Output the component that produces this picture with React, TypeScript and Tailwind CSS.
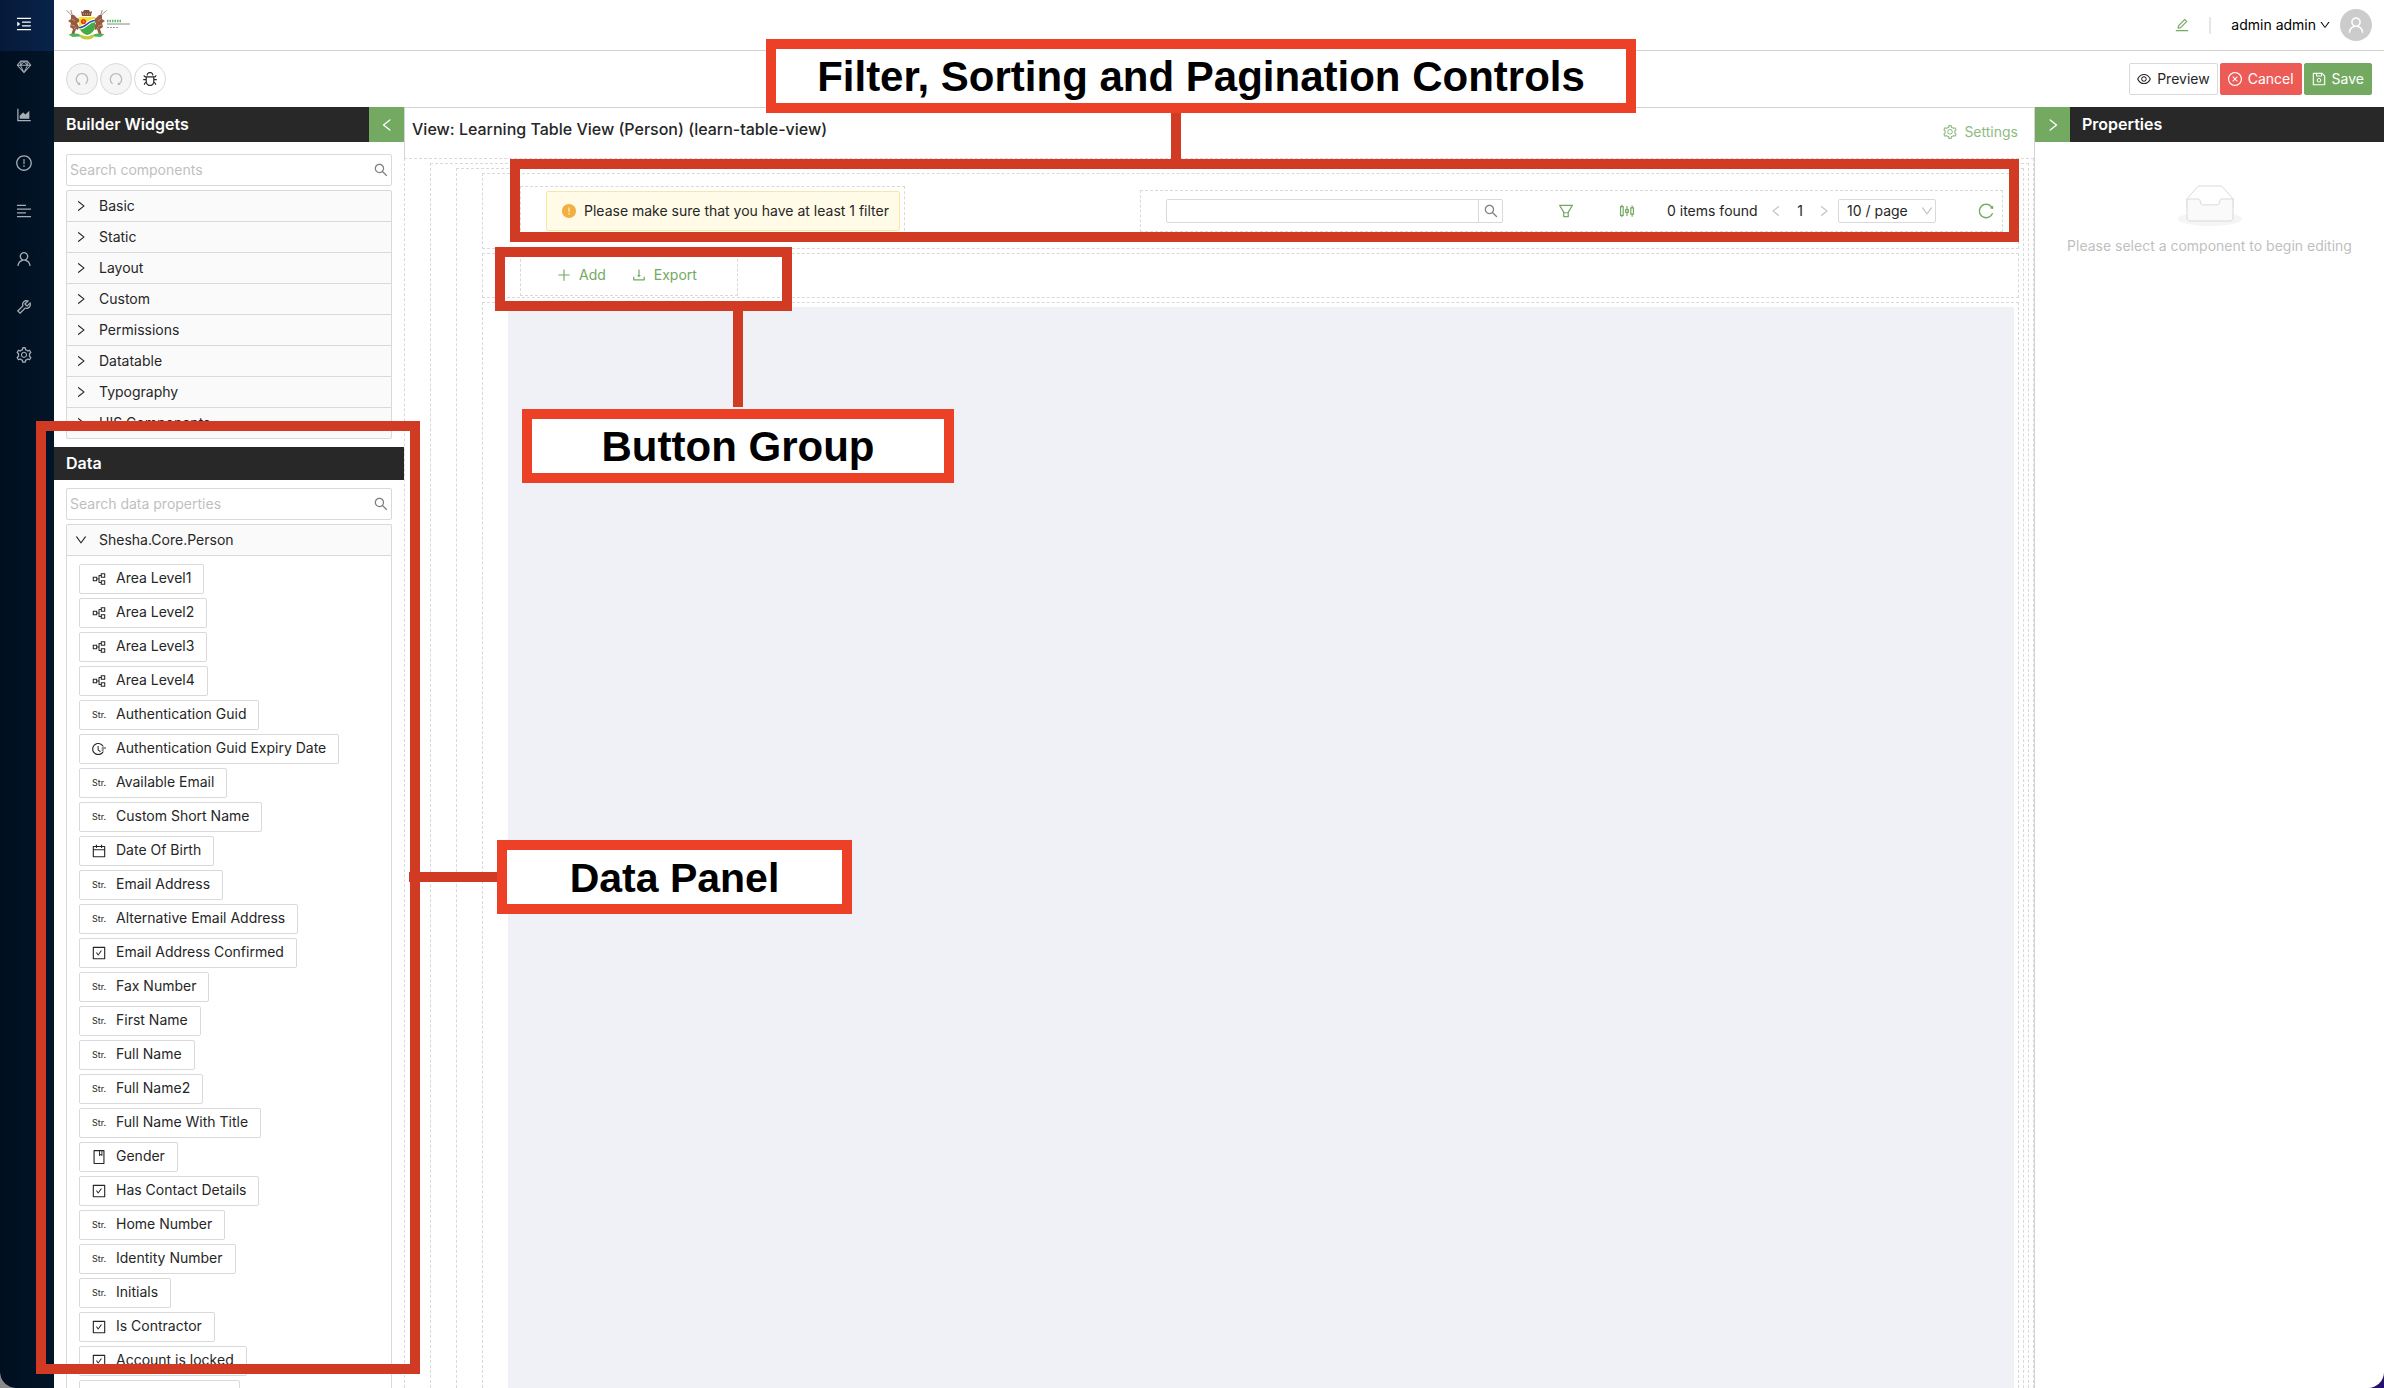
import React, { useState } from 'react';
import type { IconType } from 'react-icons';
import {
  AiFillExclamationCircle,
  AiOutlineAlignLeft,
  AiOutlineAreaChart,
  AiOutlineBook,
  AiOutlineBug,
  AiOutlineCalendar,
  AiOutlineCheckSquare,
  AiOutlineCloseCircle,
  AiOutlineDown,
  AiOutlineDownload,
  AiOutlineEdit,
  AiOutlineExclamationCircle,
  AiOutlineEye,
  AiOutlineFieldTime,
  AiOutlineFilter,
  AiOutlineLeft,
  AiOutlineMenuUnfold,
  AiOutlinePartition,
  AiOutlinePlus,
  AiOutlineRedo,
  AiOutlineReload,
  AiOutlineRight,
  AiOutlineSave,
  AiOutlineSearch,
  AiOutlineSetting,
  AiOutlineSketch,
  AiOutlineSliders,
  AiOutlineTool,
  AiOutlineUndo,
  AiOutlineUser,
} from 'react-icons/ai';

type Kind = 'ref' | 'str' | 'time' | 'date' | 'bool' | 'list';
type Size = 'xs' | 'sm' | 'md' | 'lg' | 'xl';

const boxSize: Record<Size, string> = {
  xs: 'size-2.5',
  sm: 'size-3',
  md: 'size-3.5',
  lg: 'size-4',
  xl: 'size-[18px]',
};

const glyphSize: Record<Size, string> = {
  xs: 'size-3',
  sm: 'size-3.5',
  md: 'size-4',
  lg: 'size-[18px]',
  xl: 'size-5',
};

// The glyphs carry an inner margin, so each is drawn slightly larger than its box.
function Icon({ as: Glyph, size = 'md', className = '' }: { as: IconType; size?: Size; className?: string }) {
  return (
    <span className={`inline-flex shrink-0 items-center justify-center ${boxSize[size]} ${className}`}>
      <Glyph className={`shrink-0 ${glyphSize[size]}`} aria-hidden="true" />
    </span>
  );
}

const widgetGroups = ['Basic', 'Static', 'Layout', 'Custom', 'Permissions', 'Datatable', 'Typography', 'HIS Components'];

const properties: { label: string; kind: Kind }[] = [
  { label: 'Area Level1', kind: 'ref' },
  { label: 'Area Level2', kind: 'ref' },
  { label: 'Area Level3', kind: 'ref' },
  { label: 'Area Level4', kind: 'ref' },
  { label: 'Authentication Guid', kind: 'str' },
  { label: 'Authentication Guid Expiry Date', kind: 'time' },
  { label: 'Available Email', kind: 'str' },
  { label: 'Custom Short Name', kind: 'str' },
  { label: 'Date Of Birth', kind: 'date' },
  { label: 'Email Address', kind: 'str' },
  { label: 'Alternative Email Address', kind: 'str' },
  { label: 'Email Address Confirmed', kind: 'bool' },
  { label: 'Fax Number', kind: 'str' },
  { label: 'First Name', kind: 'str' },
  { label: 'Full Name', kind: 'str' },
  { label: 'Full Name2', kind: 'str' },
  { label: 'Full Name With Title', kind: 'str' },
  { label: 'Gender', kind: 'list' },
  { label: 'Has Contact Details', kind: 'bool' },
  { label: 'Home Number', kind: 'str' },
  { label: 'Identity Number', kind: 'str' },
  { label: 'Initials', kind: 'str' },
  { label: 'Is Contractor', kind: 'bool' },
  { label: 'Account is locked', kind: 'bool' },
];

function KindIcon({ kind }: { kind: Kind }) {
  switch (kind) {
    case 'ref':
      return <Icon as={AiOutlinePartition} />;
    case 'time':
      return <Icon as={AiOutlineFieldTime} />;
    case 'date':
      return <Icon as={AiOutlineCalendar} />;
    case 'bool':
      return <Icon as={AiOutlineCheckSquare} />;
    case 'list':
      return <Icon as={AiOutlineBook} />;
    default:
      return <span className="text-[9px] leading-[14px]">Str.</span>;
  }
}

function Logo() {
  return (
    <svg className="h-8 w-[66px]" viewBox="0 0 66 32" role="img" aria-label="Department of Health">
      <g stroke="#8b8078" strokeWidth="0.900" fill="none">
        <path d="M0.500 1.500C2 3 4 4 6 7M5 1c0 2 1 4 2 6" />
        <path d="M40.500 1.500C39 3 37 4 35 7M36 1c0 2-1 4-2 6" />
      </g>
      <g fill="#985a40">
        <path d="M5 6l3 0 3 3 2 1v3l-2 1 2 4-1 3-2-1-2 6H5l2-6-3-2 1-4-3-2 3-2z" />
        <path d="M36 6l-3 0-3 3-2 1v3l2 1-2 4 1 3 2-1 2 6h3l-2-6 3-2-1-4 3-2-3-2z" />
      </g>
      <g stroke="#c9a184" strokeWidth="0.800" fill="none">
        <path d="M6 10l3 2M5 16l4 1M8 20l2-2" />
        <path d="M35 10l-3 2M36 16l-4 1M33 20l-2-2" />
      </g>
      <path d="M16 7l-1-5 2 1 1-2h5l1 2 2-1-1 5z" fill="#80503f" />
      <path d="M17 5h7" stroke="#dcb78e" strokeDasharray="1 1" />
      <path d="M13 8h16v9c0 5-4 8-8 9-4-1-8-4-8-9z" fill="#f8e02e" />
      <path d="M14 20c6 1 9-7 15-7v4c0 5-4 8-8 9-3-1-6-3-7-6z" fill="#43ab4c" />
      <path d="M13 18.500c6 1 9-7 16-7" stroke="#fff" strokeWidth="3.500" fill="none" />
      <path d="M13 18.500c6 1 9-7 16-7" stroke="#2557ad" strokeWidth="1.700" fill="none" />
      <circle cx="17.500" cy="12.500" r="2.600" fill="#e03a24" />
      <circle cx="17.500" cy="12.500" r="0.900" fill="#f5a623" />
      <path d="M2.500 25.500c5-1.500 9-1 11 0 4 2 10 2 14 0 3-1 7-1.500 11 0l-4 2.500c-8-1-19-1-28 0z" fill="#4fb357" />
      <path d="M13 25c5 3 11 3 16 0l-2 4c-4 2-8 2-12 0z" fill="#c3cc3a" />
      <path d="M41 12h15" stroke="#5cbb63" strokeWidth="2.500" strokeDasharray="1.500 1" />
      <path d="M41 15h23" stroke="#888" />
      <path d="M41 18.500h12" stroke="#999" strokeDasharray="2 1" />
    </svg>
  );
}

function EmptyBox() {
  return (
    <svg width="64" height="41" viewBox="0 0 64 41" aria-hidden="true">
      <g transform="translate(0 1)" fill="none" fillRule="evenodd">
        <ellipse fill="#f5f5f5" cx="32" cy="33" rx="32" ry="7" />
        <g fillRule="nonzero" stroke="#d9d9d9">
          <path d="M55 12.760L44.854 1.258C44.367.474 43.656 0 42.907 0H21.093c-.749 0-1.460.474-1.947 1.257L9 12.761V22h46v-9.240z" />
          <path
            d="M41.613 15.931c0-1.605.994-2.930 2.227-2.931H55v18.137C55 33.260 53.680 35 52.050 35h-40.100C10.320 35 9 33.259 9 31.137V13h11.160c1.233 0 2.227 1.323 2.227 2.928v.022c0 1.605 1.005 2.901 2.237 2.901h14.752c1.232 0 2.237-1.308 2.237-2.913v-.007z"
            fill="#fafafa"
          />
        </g>
      </g>
    </svg>
  );
}

function SideNav() {
  const items = [
    { name: 'Design', icon: AiOutlineSketch },
    { name: 'Charts', icon: AiOutlineAreaChart },
    { name: 'Alerts', icon: AiOutlineExclamationCircle },
    { name: 'Forms', icon: AiOutlineAlignLeft },
    { name: 'Users', icon: AiOutlineUser },
    { name: 'Tools', icon: AiOutlineTool },
    { name: 'Settings', icon: AiOutlineSetting },
  ];
  return (
    <nav className="flex w-[54px] shrink-0 flex-col bg-linear-to-r from-[#000f20] to-[#031528]">
      <button aria-label="Expand menu" className="flex h-[51px] items-center bg-linear-to-r from-[#06193a] to-[#08244a] pb-1 pl-4 text-white">
        <Icon as={AiOutlineMenuUnfold} size="lg" />
      </button>
      <ul className="-mt-2">
        {items.map((item) => (
          <li key={item.name}>
            <a href="#" aria-label={item.name} className="flex h-12 items-center pl-4 text-[#a6adb4]">
              <Icon as={item.icon} size="lg" />
            </a>
          </li>
        ))}
      </ul>
    </nav>
  );
}

function TopBar() {
  return (
    <header className="flex h-[51px] shrink-0 items-center border-b border-[#d3d3d3] px-3">
      <Logo />
      <div className="ml-auto flex items-center">
        <button aria-label="Edit" className="flex text-[#73a961]">
          <Icon as={AiOutlineEdit} />
        </button>
        <span className="ml-5 h-[17px] w-0.5 bg-[#e6e6e6]" />
        <button className="ml-5 flex items-center gap-1 text-black">
          admin admin <Icon as={AiOutlineDown} size="xs" />
        </button>
        <span className="ml-2.5 flex size-8 items-center justify-center rounded-full bg-[#ccc] text-white">
          <Icon as={AiOutlineUser} size="xl" />
        </span>
      </div>
    </header>
  );
}

function Toolbar() {
  return (
    <div className="flex h-14 shrink-0 items-center justify-between px-3">
      <div className="flex gap-0.5">
        <button disabled aria-label="Undo" className="flex size-8 items-center justify-center rounded-full border border-[#d9d9d9] bg-[#f5f5f5] text-[#b8b8b8]">
          <Icon as={AiOutlineUndo} />
        </button>
        <button disabled aria-label="Redo" className="flex size-8 items-center justify-center rounded-full border border-[#d9d9d9] bg-[#f5f5f5] text-[#b8b8b8]">
          <Icon as={AiOutlineRedo} />
        </button>
        <button aria-label="Debug" className="flex size-8 items-center justify-center rounded-full border border-[#d9d9d9] bg-white">
          <Icon as={AiOutlineBug} />
        </button>
      </div>
      <div className="flex gap-0.5">
        <button className="flex h-8 items-center gap-1.5 rounded-xs border border-[#d9d9d9] bg-white px-[7px]">
          <Icon as={AiOutlineEye} /> Preview
        </button>
        <button className="flex h-8 items-center gap-1.5 rounded-xs border border-[#ec5b56] bg-[#ec5b56] px-[7px] text-white">
          <Icon as={AiOutlineCloseCircle} /> Cancel
        </button>
        <button className="flex h-8 items-center gap-1.5 rounded-xs border border-[#73a961] bg-[#73a961] px-[7px] text-white">
          <Icon as={AiOutlineSave} /> Save
        </button>
      </div>
    </div>
  );
}

function SearchField({ label }: { label: string }) {
  const [value, setValue] = useState('');
  return (
    <label className="flex h-8 items-center rounded-xs border border-[#d9d9d9] bg-white px-[3px]">
      <input
        type="text"
        aria-label={label}
        placeholder={label}
        value={value}
        onChange={(e) => setValue(e.target.value)}
        className="min-w-0 flex-1 outline-none placeholder:text-[#bfbfbf]"
      />
      <Icon as={AiOutlineSearch} className="text-[#7f7f7f]" />
    </label>
  );
}

function LeftPanel() {
  return (
    <aside className="flex w-[350px] shrink-0 flex-col">
      <div className="flex h-[35px] shrink-0 bg-[#282828] text-white">
        <h2 className="flex-1 pl-3 text-base leading-[35px] font-semibold">Builder Widgets</h2>
        <button aria-label="Collapse widgets" className="flex w-[35px] items-center justify-center bg-[#73a961]">
          <Icon as={AiOutlineLeft} />
        </button>
      </div>
      <div className="flex flex-col gap-1 px-3 pt-3 pb-2">
        <SearchField label="Search components" />
        <ul className="divide-y divide-[#d9d9d9] rounded-xs border border-[#d9d9d9] bg-[#fafafa]">
          {widgetGroups.map((group) => (
            <li key={group}>
              <button className="flex h-[30px] w-full items-center gap-3 pl-2">
                <Icon as={AiOutlineRight} size="sm" />
                {group}
              </button>
            </li>
          ))}
        </ul>
      </div>
      <h2 className="h-[33px] shrink-0 bg-[#282828] pl-3 text-base leading-[33px] font-semibold text-white">Data</h2>
      <div className="flex min-h-0 flex-1 flex-col gap-1 px-3 pt-2">
        <SearchField label="Search data properties" />
        <section className="min-h-0 flex-1 overflow-hidden rounded-t-xs border border-b-0 border-[#d9d9d9]">
          <button className="flex h-[31px] w-full items-center gap-3 border-b border-[#d9d9d9] bg-[#fafafa] pl-2">
            <Icon as={AiOutlineDown} size="sm" />
            Shesha.Core.Person
          </button>
          <ul className="flex flex-col items-start gap-1 px-3 pt-2">
            {properties.map((p) => (
              <li key={p.label}>
                <button className="flex h-[30px] items-center gap-2.5 rounded-xs border border-[#d9d9d9] bg-white px-3">
                  <span className="flex w-3.5 justify-center">
                    <KindIcon kind={p.kind} />
                  </span>
                  <span className="pb-0.5">{p.label}</span>
                </button>
              </li>
            ))}
            <li aria-hidden="true" className="h-[30px] w-[161px] rounded-xs border border-[#d9d9d9]" />
          </ul>
        </section>
      </div>
    </aside>
  );
}

const dashed = 'border border-dashed border-[#d9d9d9]';

function TableControls() {
  return (
    <div className={`flex h-[42px] items-center pr-2 pl-[25px] ${dashed}`}>
      <form role="search" className="flex h-6 w-[337px] rounded-xs border border-[#d9d9d9]" onSubmit={(e) => e.preventDefault()}>
        <input type="search" aria-label="Search table" className="min-w-0 flex-1 px-2 outline-none" />
        <button aria-label="Search" className="flex w-6 items-center justify-center border-l border-[#d9d9d9] text-[#7f7f7f]">
          <Icon as={AiOutlineSearch} />
        </button>
      </form>
      <button aria-label="Filter" className="ml-[55px] flex text-[#73a961]">
        <Icon as={AiOutlineFilter} size="lg" />
      </button>
      <button aria-label="Columns" className="ml-[45px] flex text-[#73a961]">
        <Icon as={AiOutlineSliders} size="lg" />
      </button>
      <div className="ml-8 flex items-center">
        <span className="w-[97px]">0 items found</span>
        <button disabled aria-label="Previous page" className="flex w-6 justify-center text-[#bfbfbf]">
          <Icon as={AiOutlineLeft} size="sm" />
        </button>
        <button aria-label="Page 1" className="w-6 text-center">
          1
        </button>
        <button disabled aria-label="Next page" className="flex w-6 justify-center text-[#bfbfbf]">
          <Icon as={AiOutlineRight} size="sm" />
        </button>
        <div className="relative ml-0.5 w-[98px]">
          <select aria-label="Page size" className="h-6 w-full appearance-none rounded-xs border border-[#d9d9d9] bg-white pl-2">
            <option>10 / page</option>
            <option>20 / page</option>
          </select>
          <Icon as={AiOutlineDown} size="sm" className="pointer-events-none absolute top-1.5 right-[3px] text-[#bfbfbf]" />
        </div>
      </div>
      <button aria-label="Refresh" className="ml-[42px] flex text-[#73a961]">
        <Icon as={AiOutlineReload} size="lg" />
      </button>
    </div>
  );
}

function Canvas() {
  return (
    <main className="flex min-w-0 flex-1 flex-col border-t border-[#d3d3d3]">
      <div className="flex h-[50px] shrink-0 justify-between border-l border-[#d3d3d3] pt-2 pr-4 pl-[7px]">
        <h1 className="pt-px text-base leading-6 font-medium">View: Learning Table View (Person) (learn-table-view)</h1>
        <button className="flex h-8 items-center gap-[7px] text-[#8dbb82]">
          <Icon as={AiOutlineSetting} /> Settings
        </button>
      </div>
      <div className="flex flex-1 flex-col border border-b-0 border-dashed border-[#d9d9d9] pt-1 pr-1 pl-[25px]">
        <div className="flex flex-1 flex-col border border-b-0 border-dashed border-[#d9d9d9] pt-1 pr-1 pl-[25px]">
          <div className="flex flex-1 flex-col gap-1 border border-b-0 border-dashed border-[#d9d9d9] pt-1 pr-1 pl-[25px]">
            <div className={`flex items-center justify-between py-3 pr-[15px] pl-[37px] ${dashed}`}>
              <div className={`py-1 pr-1 pl-[25px] ${dashed}`}>
                <div role="alert" className="flex h-10 w-[354px] items-center gap-2 rounded-xs border border-[#f7e7a0] bg-[#fffbe6] pr-2 pl-[15px] whitespace-nowrap">
                  <Icon as={AiFillExclamationCircle} className="text-[#f2b040]" /> Please make sure that you have at least 1 filter
                </div>
              </div>
              <TableControls />
            </div>
            <div className={`flex pb-px pr-1 pl-[37px] ${dashed}`}>
              <div className={`flex h-[42px] w-[218px] items-center gap-[26px] pl-9 text-[#73a961] ${dashed}`}>
                <button className="flex items-center gap-2">
                  <Icon as={AiOutlinePlus} /> Add
                </button>
                <button className="flex items-center gap-2">
                  <Icon as={AiOutlineDownload} /> Export
                </button>
              </div>
            </div>
            <div className="flex flex-1 border border-b-0 border-dashed border-[#d9d9d9] pt-1 pr-1 pl-[25px]">
              <div className="flex-1 bg-[#f0f1f6]" />
            </div>
          </div>
        </div>
      </div>
    </main>
  );
}

function RightPanel() {
  return (
    <aside className="w-[350px] shrink-0 border-l border-[#d3d3d3]">
      <div className="flex h-[35px] bg-[#282828] text-white">
        <button aria-label="Collapse properties" className="flex w-[35px] items-center justify-center bg-[#73a961]">
          <Icon as={AiOutlineRight} />
        </button>
        <h2 className="pl-3 text-base leading-[35px] font-semibold">Properties</h2>
      </div>
      <div className="flex flex-col items-center gap-2.5 pt-[43px]">
        <EmptyBox />
        <p className="text-[#bfbfbf]">Please select a component to begin editing</p>
      </div>
    </aside>
  );
}

const callout =
  'absolute flex h-[74px] items-center justify-center border-10 border-[#ec4127] bg-white pt-0.5 font-["Liberation_Sans",sans-serif] leading-none font-bold whitespace-nowrap text-black';

function Annotations() {
  return (
    <div className="pointer-events-none absolute inset-0">
      <div className="absolute top-[113px] left-[1171px] h-[46px] w-2.5 bg-[#d13a23]" />
      <div className="absolute top-[159px] right-[365px] left-[510px] h-[83px] border-10 border-[#d13a23]" />
      <div className="absolute top-[247px] left-[495px] h-16 w-[297px] border-10 border-[#d13a23]" />
      <div className="absolute top-[311px] left-[733px] h-24 w-2.5 bg-[#d13a23]" />
      <div className="absolute top-[421px] left-9 h-[953px] w-96 border-10 border-[#d13a23]" />
      <div className="absolute top-[872px] left-[409px] h-2.5 w-[88px] bg-[#d13a23]" />
      <div className={`top-[39px] left-[766px] w-[870px] text-[42px] ${callout}`}>Filter, Sorting and Pagination Controls</div>
      <div className={`top-[409px] left-[522px] w-[432px] text-[42px] ${callout}`}>Button Group</div>
      <div className={`top-[840px] left-[497px] w-[355px] text-[41px] ${callout}`}>Data Panel</div>
    </div>
  );
}

export default function App() {
  return (
    <div className="relative h-screen overflow-hidden bg-linear-to-r from-[#8a8a8a] to-[#26106e] font-[Inter,sans-serif] text-sm text-[#262626]">
      <div className="flex h-full overflow-hidden rounded-b-2xl bg-white">
        <SideNav />
        <div className="flex min-w-0 flex-1 flex-col">
          <TopBar />
          <Toolbar />
          <div className="flex min-h-0 flex-1">
            <LeftPanel />
            <Canvas />
            <RightPanel />
          </div>
        </div>
      </div>
      <Annotations />
    </div>
  );
}
